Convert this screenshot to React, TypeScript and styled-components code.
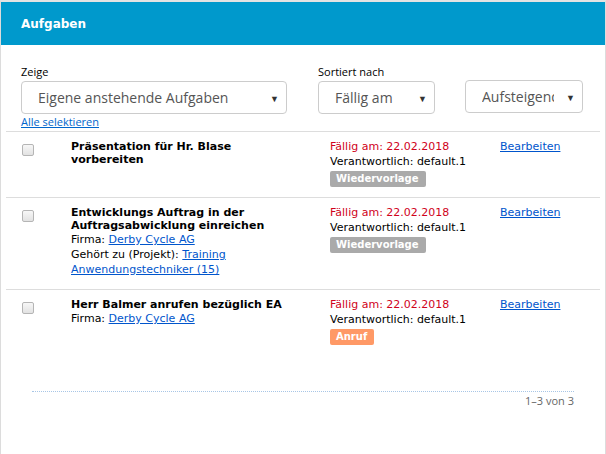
import React from "react";
import styled, { createGlobalStyle } from "styled-components";

const Global = createGlobalStyle`
  html, body { margin: 0; padding: 0; background: #fff; }
  body { font-family: "DejaVu Sans", Verdana, sans-serif; font-size: 11px; color: #000; }
`;

const Panel = styled.div`
  min-height: 452px;
  border-top: 2px solid #e3e3e3;
  border-left: 1px solid #dcdcdc;
  border-right: 1px solid #dcdcdc;
  background: #fff;
`;

const Header = styled.div`
  height: 43px;
  background: #0099cc;
  color: #fff;
  display: flex;
  align-items: center;
  padding-left: 20px;
  font-family: "DejaVu Sans", sans-serif;
  font-weight: bold;
  font-size: 12px;
`;

const Filters = styled.div`
  display: grid;
  grid-template-columns: 266px 118px 118px;
  column-gap: 30px;
  padding: 19px 0 0 20px;
  align-items: end;
`;

const Field = styled.div<{ $shift?: number; $lift?: number }>`
  display: flex;
  flex-direction: column;
  margin-left: ${(p) => p.$shift ?? 0}px;
  margin-bottom: ${(p) => p.$lift ?? 0}px;
`;

const Label = styled.label`
  font-family: "Open Sans", sans-serif;
  font-size: 11px;
  line-height: 15px;
  margin-bottom: 2px;
  color: #000;
`;

const SelectBox = styled.div<{ $pad: number }>`
  position: relative;
  height: 33px;
  box-sizing: border-box;
  border: 1px solid #cccccc;
  border-radius: 4px;
  display: flex;
  align-items: center;
  padding-left: ${(p) => p.$pad}px;
  font-family: "Open Sans", sans-serif;
  font-size: 14px;
  color: #555;
  overflow: hidden;
  white-space: nowrap;
`;

const SelectText = styled.span<{ $clip?: number }>`
  display: block;
  overflow: hidden;
  max-width: ${(p) => (p.$clip ? `${p.$clip}px` : "none")};
`;

const Arrow = styled.span`
  position: absolute;
  right: 7px;
  top: 50%;
  transform: translateY(-50%);
  font-size: 9px;
  color: #333;
`;

const SelectAll = styled.a`
  display: block;
  margin: 1px 0 0 20px;
  font-family: "Open Sans", sans-serif;
  font-size: 11px;
  line-height: 14px;
  color: #0066cc;
  text-decoration: underline;
`;

const List = styled.div`
  margin: 2px 5px 0 5px;
`;

const Row = styled.div<{ $h: number }>`
  display: grid;
  grid-template-columns: 16px 49px 259px 171px 1fr;
  height: ${(p) => p.$h}px;
  box-sizing: border-box;
  border-top: 1px solid #dddddd;
  padding-top: 8px;
`;

const Check = styled.input.attrs({ type: "checkbox" })`
  appearance: none;
  -webkit-appearance: none;
  grid-column: 2;
  width: 12px;
  height: 12px;
  margin: 4px 0 0 0;
  box-sizing: border-box;
  border: 1px solid #b5b5b5;
  border-radius: 2px;
  background: linear-gradient(#f7f7f7, #e2e2e2);
`;

const Main = styled.div`
  grid-column: 3;
  display: flex;
  flex-direction: column;
`;

const Title = styled.div`
  font-weight: bold;
  font-size: 11px;
  line-height: 13px;
`;

const Meta = styled.div`
  line-height: 15px;
`;

const Link = styled.a`
  color: #0055cc;
  text-decoration: underline;
`;

const Info = styled.div`
  grid-column: 4;
  display: flex;
  flex-direction: column;
  align-items: flex-start;
`;

const Due = styled.div`
  color: #d0021b;
  line-height: 14px;
`;

const Owner = styled.div`
  line-height: 16px;
`;

const Badge = styled.span<{ $bg: string }>`
  display: inline-block;
  background: ${(p) => p.$bg};
  color: #fff;
  font-weight: bold;
  font-size: 10px;
  line-height: 16px;
  padding: 0 7px 0 6px;
  border-radius: 2px;
  margin-top: 1px;
`;

const Edit = styled(Link)`
  grid-column: 5;
  align-self: start;
  line-height: 14px;
  margin-left: -1px;
`;

const Footer = styled.div`
  margin: 22px 31px 0 31px;
  border-top: 1px dotted #a8c6e6;
  text-align: right;
  font-family: "Open Sans", sans-serif;
  font-size: 11px;
  color: #666;
  padding-top: 1px;
`;

type Task = {
  title: string[];
  firma?: boolean;
  projekt?: boolean;
  badge: string;
  color: string;
  h: number;
};

const tasks: Task[] = [
  { title: ["Präsentation für Hr. Blase", "vorbereiten"], badge: "Wiedervorlage", color: "#aaaaaa", h: 66 },
  {
    title: ["Entwicklungs Auftrag in der", "Auftragsabwicklung einreichen"],
    firma: true,
    projekt: true,
    badge: "Wiedervorlage",
    color: "#aaaaaa",
    h: 92,
  },
  { title: ["Herr Balmer anrufen bezüglich EA"], firma: true, badge: "Anruf", color: "#ff9966", h: 80 },
];

export default function App() {
  return (
    <>
      <Global />
      <Panel>
        <Header>Aufgaben</Header>
        <Filters>
          <Field>
            <Label>Zeige</Label>
            <SelectBox $pad={16}>
              <SelectText>Eigene anstehende Aufgaben</SelectText>
              <Arrow>▼</Arrow>
            </SelectBox>
          </Field>
          <Field $shift={1}>
            <Label>Sortiert nach</Label>
            <SelectBox $pad={16}>
              <SelectText>Fällig am</SelectText>
              <Arrow>▼</Arrow>
            </SelectBox>
          </Field>
          <Field $lift={1}>
            <SelectBox $pad={16}>
              <SelectText $clip={72}>Aufsteigend</SelectText>
              <Arrow>▼</Arrow>
            </SelectBox>
          </Field>
        </Filters>
        <SelectAll href="#">Alle selektieren</SelectAll>
        <List>
          {tasks.map((t, i) => (
            <Row key={i} $h={t.h}>
              <Check />
              <Main>
                <Title>
                  {t.title.map((l, j) => (
                    <div key={j}>{l}</div>
                  ))}
                </Title>
                {t.firma && (
                  <Meta>
                    Firma: <Link href="#">Derby Cycle AG</Link>
                  </Meta>
                )}
                {t.projekt && (
                  <Meta>
                    Gehört zu (Projekt): <Link href="#">Training Anwendungstechniker (15)</Link>
                  </Meta>
                )}
              </Main>
              <Info>
                <Due>Fällig am: 22.02.2018</Due>
                <Owner>Verantwortlich: default.1</Owner>
                <Badge $bg={t.color}>{t.badge}</Badge>
              </Info>
              <Edit href="#">Bearbeiten</Edit>
            </Row>
          ))}
        </List>
        <Footer>1–3 von 3</Footer>
      </Panel>
    </>
  );
}
